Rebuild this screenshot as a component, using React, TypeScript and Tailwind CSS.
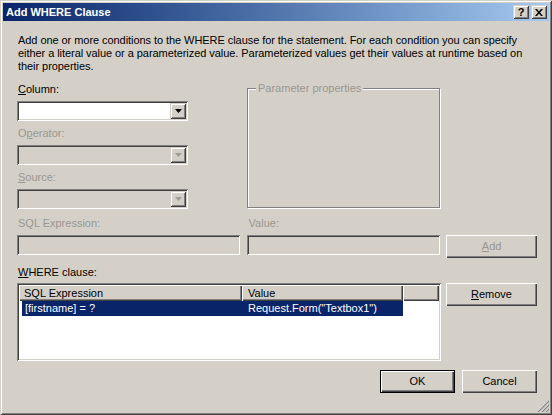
const sunken =
  'shadow-[inset_1px_1px_0_#808080,inset_-1px_-1px_0_#ffffff,inset_2px_2px_0_#404040,inset_-2px_-2px_0_#d4d0c8]';
const raised =
  'shadow-[inset_1px_1px_0_#ffffff,inset_-1px_-1px_0_#404040,inset_-2px_-2px_0_#808080]';
const raisedInner =
  'shadow-[inset_1px_1px_0_#d4d0c8,inset_-1px_-1px_0_#404040,inset_2px_2px_0_#ffffff,inset_-2px_-2px_0_#808080]';
const raisedDefault =
  'shadow-[inset_0_0_0_1px_#000000,inset_2px_2px_0_#ffffff,inset_-2px_-2px_0_#404040,inset_-3px_-3px_0_#808080]';

function Label({ children, disabled }: { children: React.ReactNode; disabled?: boolean }) {
  return (
    <div className={`h-[18px] leading-[13px] pl-px ${disabled ? 'text-[#9a978f]' : 'text-black'}`}>
      {children}
    </div>
  );
}

function Combo({ enabled }: { enabled?: boolean }) {
  return (
    <div className={`h-[20px] p-[2px] flex ${sunken} ${enabled ? 'bg-white' : 'bg-[#d4d0c8]'}`}>
      <div className="flex-1" />
      <div className={`w-[16px] h-[16px] bg-[#d4d0c8] flex items-center justify-center ${raisedInner}`}>
        <svg width="7" height="4" viewBox="0 0 7 4">
          <path d="M0 0h7L3.5 4z" fill={enabled ? '#000000' : '#a09d96'} />
        </svg>
      </div>
    </div>
  );
}

function TextBox() {
  return <div className={`h-[20px] bg-[#d4d0c8] ${sunken}`} />;
}

export default function App() {
  return (
    <div className="w-[552px] h-[415px] bg-[#d4d0c8] p-[3px] flex flex-col text-[11px] font-['Liberation_Sans',Arial,sans-serif] shadow-[inset_1px_1px_0_#d4d0c8,inset_-1px_-1px_0_#404040,inset_2px_2px_0_#ffffff,inset_-2px_-2px_0_#808080]">
      {/* title bar */}
      <div className="h-[18px] shrink-0 flex items-center bg-linear-to-r from-[#0a246a] to-[#a6caf0] pl-[3px] pr-[2px]">
        <span className="flex-1 text-white font-bold text-[11px] leading-[18px]">Add WHERE Clause</span>
        <div className="flex gap-[2px]">
          <div className={`w-[16px] h-[14px] bg-[#d4d0c8] flex items-center justify-center ${raisedInner}`}>
            <span className="font-bold text-[11px] leading-[11px] text-black">?</span>
          </div>
          <div className={`w-[16px] h-[14px] bg-[#d4d0c8] flex items-center justify-center ${raisedInner}`}>
            <svg width="8" height="7" viewBox="0 0 8 7">
              <path d="M0 0h2l2 2.5L6 0h2L5 3.5 8 7H6L4 4.5 2 7H0l3-3.5z" fill="#000000" />
            </svg>
          </div>
        </div>
      </div>

      {/* body */}
      <div className="relative flex-1 flex flex-col pl-[14px] pr-[12px] text-black">
        <p className="mt-[13px] ml-px leading-[13px] tracking-[-0.06px]">
          Add one or more conditions to the WHERE clause for the statement. For each condition you can specify
          <br />
          either a literal value or a parameterized value. Parameterized values get their values at runtime based on
          <br />
          their properties.
        </p>

        <div className="flex items-start">
          <div className="w-[171px] mt-[10px] flex flex-col">
            <Label>
              <span className="underline">C</span>olumn:
            </Label>
            <Combo enabled />
            <div className="h-[6px]" />
            <Label disabled>
              O<span className="underline">p</span>erator:
            </Label>
            <Combo />
            <div className="h-[6px]" />
            <Label disabled>
              <span className="underline">S</span>ource:
            </Label>
            <Combo />
          </div>

          <div className="relative ml-[59px] mt-[15px] w-[193px] h-[120px] border border-[#808080] shadow-[inset_1px_1px_0_#ffffff,1px_1px_0_#ffffff]">
            <span className="absolute left-[8px] top-[-7px] px-[2px] bg-[#d4d0c8] leading-[13px] text-[#9a978f]">
              Parameter properties
            </span>
          </div>
        </div>

        <div className="flex items-start mt-[8px]">
          <div className="w-[223px] flex flex-col">
            <Label disabled>SQL Expression:</Label>
            <TextBox />
          </div>
          <div className="w-[194px] ml-[7px] flex flex-col">
            <Label disabled>
              <span className="pl-px">Value:</span>
            </Label>
            <TextBox />
          </div>
          <div
            className={`ml-[6px] mt-[18px] w-[91px] h-[23px] bg-[#d4d0c8] flex items-center justify-center text-[#9a978f] ${raised}`}
          >
            <span>
              <span className="underline">A</span>dd
            </span>
          </div>
        </div>

        <div className="mt-[8px] h-[17px] leading-[13px] pl-px">
          <span className="underline">W</span>HERE clause:
        </div>

        <div className="flex items-start">
          <div className={`w-[424px] h-[78px] bg-white p-[2px] flex flex-col ${sunken}`}>
            <div className="h-[16px] flex shrink-0">
              <div className={`w-[223px] bg-[#d4d0c8] pl-[5px] leading-[16px] ${raised}`}>SQL Expression</div>
              <div className={`w-[161px] bg-[#d4d0c8] pl-[6px] leading-[16px] ${raised}`}>Value</div>
              <div className={`flex-1 bg-[#d4d0c8] ${raised}`} />
            </div>
            <div className="ml-[3px] w-[381px] h-[15px] flex bg-[#0a246a] text-white leading-[15px]">
              <div className="w-[220px] pl-[3px]">[firstname] = ?</div>
              <div className="pl-[6px]">Request.Form("Textbox1")</div>
            </div>
          </div>
          <div
            className={`ml-[5px] w-[91px] h-[23px] bg-[#d4d0c8] flex items-center justify-center ${raised}`}
          >
            <span>
              <span className="underline">R</span>emove
            </span>
          </div>
        </div>

        <div className="mt-[9px] flex justify-end gap-[7px]">
          <div className={`w-[75px] h-[23px] bg-[#d4d0c8] flex items-center justify-center ${raisedDefault}`}>
            OK
          </div>
          <div className={`w-[75px] h-[23px] bg-[#d4d0c8] flex items-center justify-center ${raised}`}>
            Cancel
          </div>
        </div>

        {/* size grip */}
        <svg className="absolute right-0 bottom-0" width="12" height="12" viewBox="0 0 12 12">
          <path d="M11 1L1 11M11 5L5 11M11 9L9 11" stroke="#ffffff" strokeWidth="1" />
          <path d="M12 1L1 12M12 5L5 12M12 9L9 12" stroke="#808080" strokeWidth="1.2" />
        </svg>
      </div>
    </div>
  );
}
